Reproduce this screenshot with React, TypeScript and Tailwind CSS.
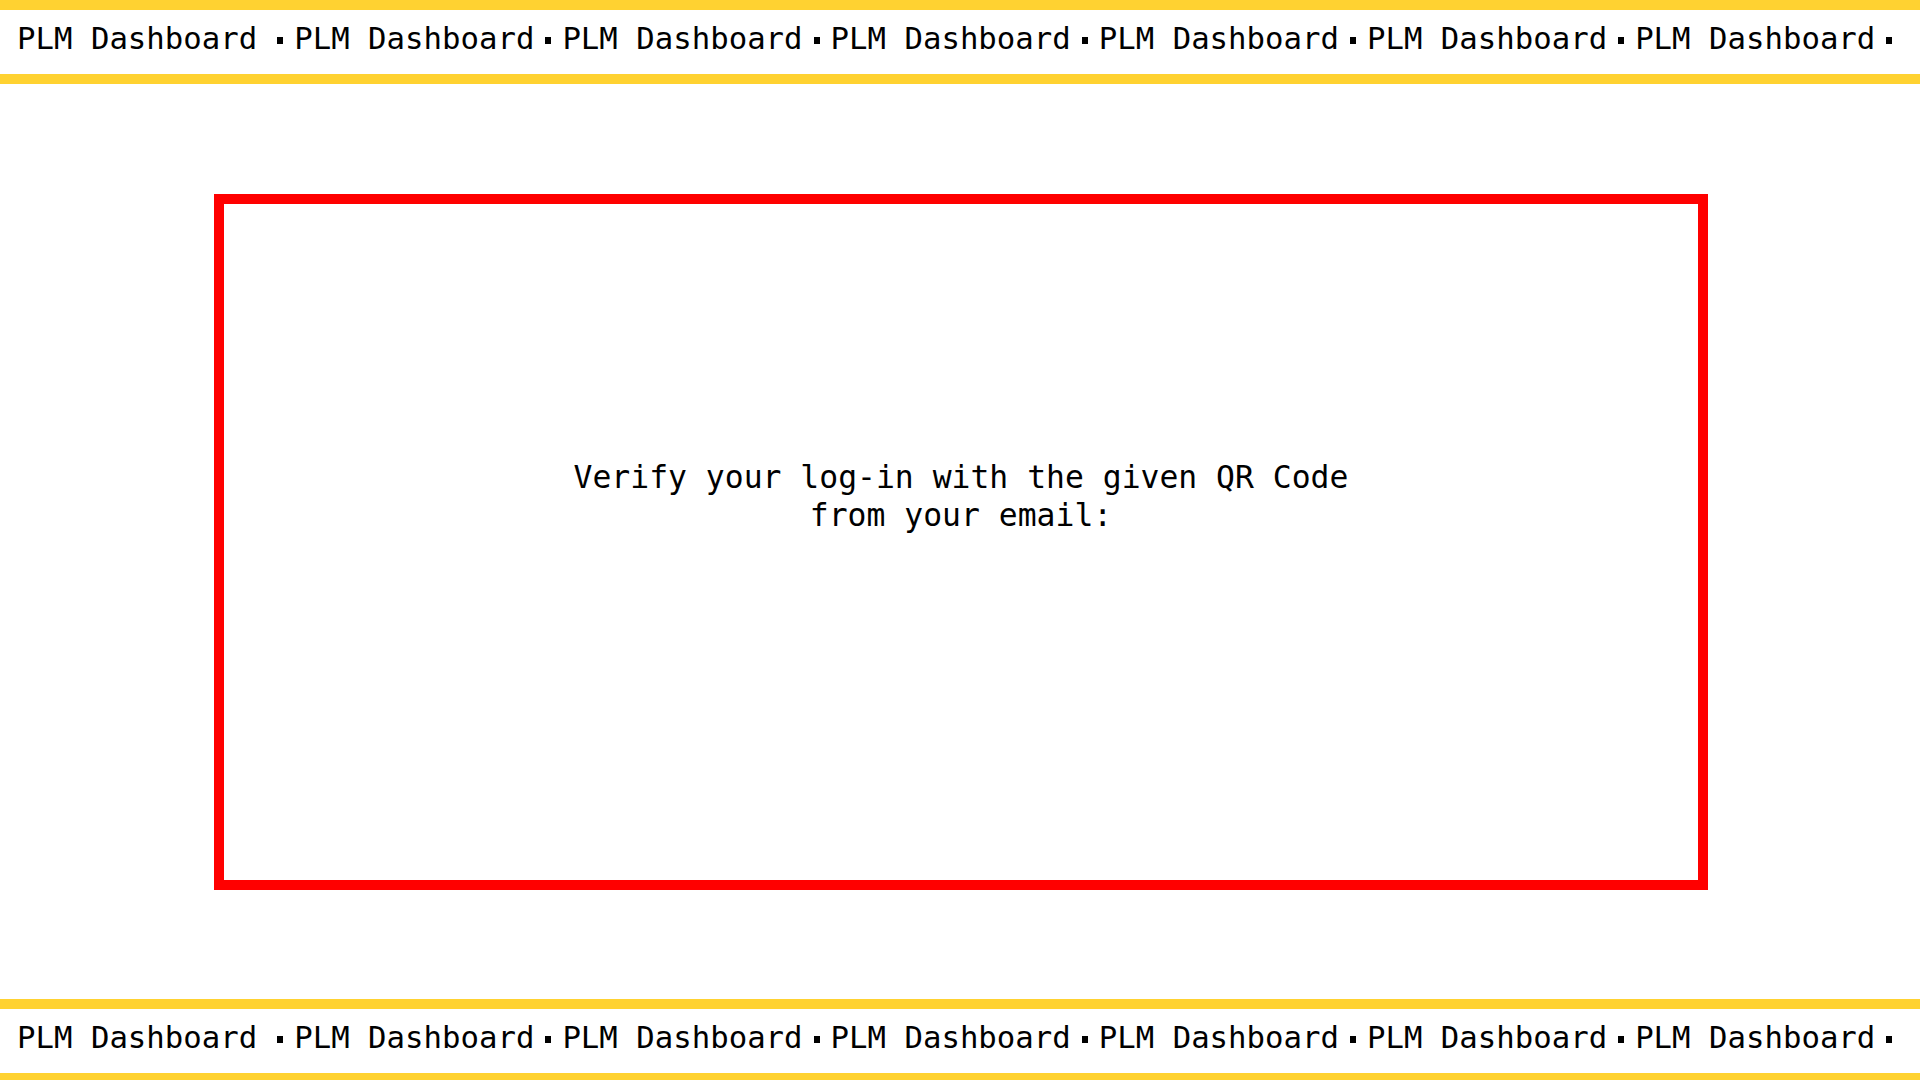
import React from "react";

const FONT = { fontFamily: '"DejaVu Sans Mono", "Liberation Mono", monospace' };

function Ticker() {
  const items = Array.from({ length: 7 });
  return (
    <div className="h-[84px] border-y-[10px] border-[#ffd231] bg-white flex items-center pb-[6px] pl-[17px] overflow-hidden whitespace-nowrap">
      {items.map((_, i) => (
        <div key={i} className="flex items-center shrink-0">
          <span className="text-[30.7px] leading-[36px] text-black">PLM Dashboard</span>
          <span
            className={`inline-block w-[6px] h-[7px] bg-black mt-[2px] ${i === 0 ? "ml-[20px]" : "ml-[11px]"} mr-[11px]`}
          />
        </div>
      ))}
    </div>
  );
}

export default function App() {
  return (
    <div className="w-[1920px] bg-white text-black" style={FONT}>
      <Ticker />
      <main className="h-[915px] flex items-center justify-center pl-[2px]">
        <div className="w-[1494px] h-[696px] border-[10px] border-[#ff0000] flex flex-col items-center justify-center pb-[92px]">
          <p className="text-[31.4px] leading-[38px] text-center">
            Verify your log-in with the given QR Code
            <br />
            from your email:
          </p>
        </div>
      </main>
      <Ticker />
    </div>
  );
}
